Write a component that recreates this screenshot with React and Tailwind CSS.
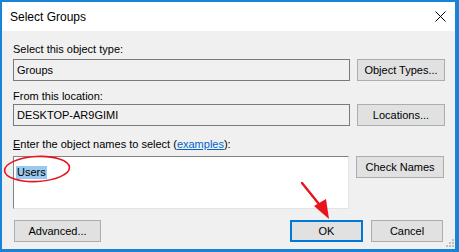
import React from 'react';

const font = { fontFamily: '"Liberation Sans", Arial, sans-serif' };

// plain Windows 10 push button
const WinButton = ({ children, primary = false, className = '' }) => (
  <div
    className={`h-[22px] flex items-center justify-center bg-[#e1e1e1] text-[11px] text-black ${
      primary ? 'border-2 border-[#0078d7]' : 'border border-[#adadad]'
    } ${className}`}
  >
    {children}
  </div>
);

const ReadOnlyBox = ({ value }) => (
  <div className="w-[337px] h-[22px] border border-[#7a7a7a] bg-[#f0f0f0] flex items-center pl-[3px] text-[11px] text-black">
    {value}
  </div>
);

const ResizeGrip = () => (
  <svg className="absolute right-[1px] bottom-[2px]" width="8" height="8" viewBox="0 0 8 8">
    <rect x="6" y="0" width="2" height="2" fill="#bfbfbf" />
    <rect x="3" y="3" width="2" height="2" fill="#bfbfbf" />
    <rect x="6" y="3" width="2" height="2" fill="#bfbfbf" />
    <rect x="0" y="6" width="2" height="2" fill="#bfbfbf" />
    <rect x="3" y="6" width="2" height="2" fill="#bfbfbf" />
    <rect x="6" y="6" width="2" height="2" fill="#bfbfbf" />
  </svg>
);

export default function App() {
  return (
    <div
      className="relative w-[459px] h-[252px] flex flex-col bg-[#f0f0f0] border-[#1883d7] border-l-2 border-t-2 border-r-4 border-b-[3px] overflow-hidden"
      style={font}
    >
      {/* title bar */}
      <div className="h-[29px] shrink-0 bg-white flex items-center justify-between pl-[8px] pr-[9px]">
        <span className="text-[12px] text-black">Select Groups</span>
        <svg width="11" height="11" viewBox="0 0 11 11">
          <path d="M0.5 0.5 L10.5 10.5 M10.5 0.5 L0.5 10.5" stroke="#000" strokeWidth="1" />
        </svg>
      </div>

      {/* body */}
      <div className="relative flex-1 flex flex-col pl-[11px] pt-[12px]">
        <div className="h-[13px] leading-[13px] text-[11px] text-black">Select this object type:</div>
        <div className="mt-[3px] flex gap-[7px]">
          <ReadOnlyBox value="Groups" />
          <WinButton className="w-[88px]">Object Types...</WinButton>
        </div>

        <div className="mt-[9px] h-[13px] leading-[13px] text-[11px] text-black">From this location:</div>
        <div className="mt-[1px] flex gap-[7px]">
          <ReadOnlyBox value="DESKTOP-AR9GIMI" />
          <WinButton className="w-[88px]">Locations...</WinButton>
        </div>

        <div className="mt-[12px] h-[13px] leading-[13px] text-[11px] text-black">
          <span className="underline">E</span>nter the object names to select (
          <span className="text-[#0066cc] underline">examples</span>):
        </div>
        <div className="mt-[5px] flex gap-[7px] items-start">
          <div className="w-[336px] h-[53px] bg-white border-t border-l border-[#828282] border-r border-b border-r-[#e3e3e3] border-b-[#e3e3e3] pl-[2px] pt-[2px]">
            <span className="inline-block h-[13px] leading-[13px] px-[1px] bg-[#99c9ef] text-[11px] text-black">Users</span>
          </div>
          <WinButton className="w-[88px]">Check Names</WinButton>
        </div>

        <div className="mt-[11px] flex">
          <WinButton className="w-[87px] ml-[1px]">Advanced...</WinButton>
          <WinButton primary className="w-[73px] ml-[189px]">OK</WinButton>
          <WinButton className="w-[72px] ml-[8px]">Cancel</WinButton>
        </div>

        <ResizeGrip />
      </div>

      {/* red annotations */}
      <svg className="absolute left-0 top-0 pointer-events-none" width="459" height="252" viewBox="0 0 459 252">
        <ellipse cx="35" cy="167" rx="32.5" ry="12.5" fill="none" stroke="#e8141b" strokeWidth="1.6" transform="rotate(-3 35 167)" />
        <line x1="300" y1="181" x2="321" y2="207" stroke="#e8141b" strokeWidth="2.4" strokeLinecap="round" />
        <polygon points="327,217 312,204 324,197" fill="#e8141b" />
      </svg>
    </div>
  );
}
